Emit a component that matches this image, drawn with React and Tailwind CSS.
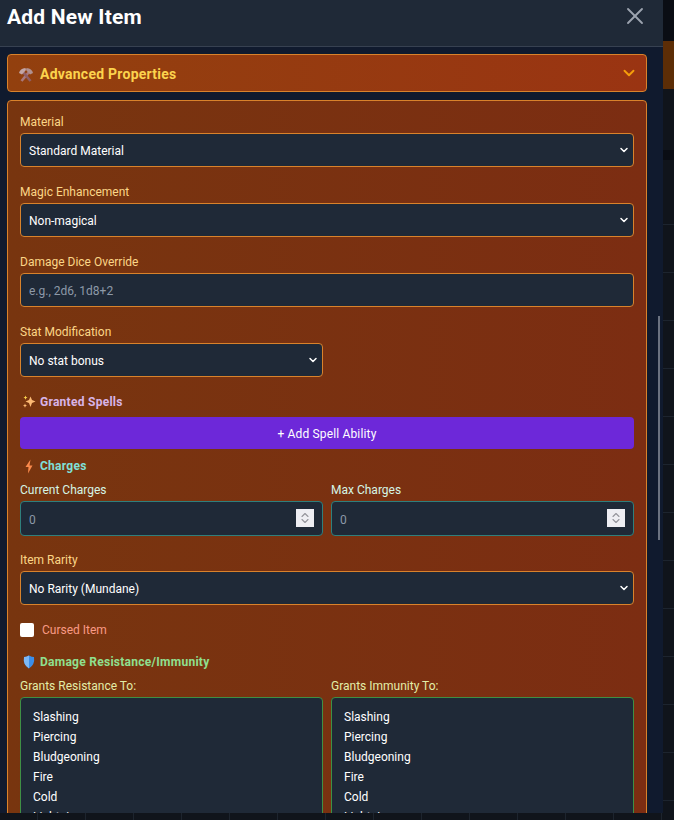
import { ChevronDown, ChevronUp, X } from "lucide-react";

const DAMAGE_TYPES = ["Slashing", "Piercing", "Bludgeoning", "Fire", "Cold", "Lightning"];

function HammerIcon() {
  return (
    <svg width="16" height="15" viewBox="0 0 16 15" className="shrink-0">
      <path d="M3.5 14 L11 5" stroke="#a9787c" strokeWidth="2.6" />
      <path d="M12.5 14 L5 5" stroke="#8f5f66" strokeWidth="2.6" />
      <path d="M1 6 Q2 1.5 7.5 1 L8 3 L4 7.5 Z" fill="#c2a5a6" />
      <path d="M15 6 Q14 1.5 8.5 1 L8 3 L12 7.5 Z" fill="#b0908f" />
    </svg>
  );
}

function SparklesIcon() {
  return (
    <svg width="14" height="14" viewBox="0 0 14 14" className="shrink-0">
      <path d="M8.5 1.5 L10 5 L13.5 6.5 L10 8 L8.5 12 L7 8 L3.5 6.5 L7 5 Z" fill="#fdba74" />
      <path d="M3.5 .5 L4.1 2 L5.5 2.6 L4.1 3.2 L3.5 4.7 L2.9 3.2 L1.5 2.6 L2.9 2 Z" fill="#fcd34d" />
      <path d="M3 8.5 L3.6 10 L5 10.6 L3.6 11.2 L3 12.7 L2.4 11.2 L1 10.6 L2.4 10 Z" fill="#fdba74" />
    </svg>
  );
}

function BoltIcon() {
  return (
    <svg width="14" height="15" viewBox="0 0 14 15" className="shrink-0">
      <path d="M8.5 .5 L3.5 8 L6.5 8 L6 14.5 L10.5 6.5 L7.5 6.5 Z" fill="#fb8a4c" />
    </svg>
  );
}

function ShieldIcon() {
  return (
    <svg width="14" height="14" viewBox="0 0 14 14" className="shrink-0">
      <path d="M7 .5 Q10 2 12 2 Q13.2 9.5 7 13.5 Q.8 9.5 2 2 Q4 2 7 .5 Z" fill="#3b8eea" />
      <path d="M7 .5 Q4 2 2 2 Q.8 9.5 7 13.5 Z" fill="#7db8f5" />
    </svg>
  );
}

function Field({ label, labelClass = "text-[#fcd687]", children, className = "" }) {
  return (
    <div className={className}>
      <label className={`block text-[12px] leading-[16px] mb-[3px] ${labelClass}`}>{label}</label>
      {children}
    </div>
  );
}

function Select({ children }) {
  return (
    <div className="relative">
      <select className="block h-[34px] w-full appearance-none rounded-[4px] border border-[#d9822b] bg-[#1f2937] pl-[8px] pr-[20px] pt-[2px] text-[12px] text-white outline-none">
        {children}
      </select>
      <ChevronDown size={12} strokeWidth={3} className="pointer-events-none absolute right-[4px] top-[11px] text-white" />
    </div>
  );
}

const numberClass =
  "block w-full h-[35px] rounded-[4px] border border-[#2f7f7c] bg-[#1f2937] px-[8px] pt-[2px] text-[12px] text-white placeholder:text-[#8d99a8] outline-none [appearance:textfield] [&::-webkit-inner-spin-button]:appearance-none";

function NumberInput() {
  return (
    <div className="relative">
      <input type="number" placeholder="0" className={numberClass} />
      <div className="absolute right-[9px] top-[8px] flex h-[18px] w-[18px] flex-col items-center justify-center bg-[#eeeef3] text-[#94949c]">
        <ChevronUp size={14} strokeWidth={2.2} className="-mb-[3px]" />
        <ChevronDown size={14} strokeWidth={2.2} className="-mt-[3px]" />
      </div>
    </div>
  );
}

function SectionTitle({ icon, color, children }) {
  return (
    <div className={`flex items-center gap-[4px] pl-[2px] text-[12px] leading-[16px] font-bold tracking-[0.27px] ${color}`}>
      {icon}
      <span>{children}</span>
    </div>
  );
}

function DamageList({ label }) {
  return (
    <Field label={label} labelClass="text-[#e3eda8]">
      <div className="h-[130px] overflow-hidden rounded-[4px] border border-[#3f8f45] bg-[#1f2937] pl-[12px] pt-[9px] text-[12px] leading-[20px] text-white">
        {DAMAGE_TYPES.map((type) => (
          <div key={type}>{type}</div>
        ))}
      </div>
    </Field>
  );
}

export default function App() {
  return (
    <div className="relative h-[820px] w-[674px] overflow-hidden bg-[#10141b] bg-[linear-gradient(#1d242e_1px,transparent_1px),linear-gradient(90deg,#1d242e_1px,transparent_1px)] bg-[size:48px_48px] bg-[position:37px_32px] font-['Roboto','Noto_Sans',sans-serif]">
      <div className="relative h-[813px] w-[663px] overflow-hidden bg-[#101a2e]">
        <header className="flex h-[47px] items-center justify-between border-b border-[#374151] bg-[#1f2937] pl-[7px] pr-[14px] pb-[14px]">
          <h1 className="pt-[2px] text-[21px] font-bold leading-[28px] tracking-[0.2px] text-white">Add New Item</h1>
          <X size={28} strokeWidth={1.6} className="text-[#9ca3af]" />
        </header>

        <div className="pl-[7px] pr-[16px] pt-[7px]">
          <div className="flex h-[38px] items-center justify-between rounded-[4px] border border-[#d9822b] bg-gradient-to-r from-[#92400e] to-[#9a3412] pl-[10px] pr-[8px]">
            <div className="flex items-center gap-[6px] pt-[3px] text-[14px] font-bold tracking-[0.25px] text-[#fcd34d]">
              <HammerIcon />
              <span>Advanced Properties</span>
            </div>
            <ChevronDown size={18} strokeWidth={2.5} className="-mt-[1px] text-[#f59e0b]" />
          </div>

          <div className="mt-[8px] h-[800px] rounded-[4px] border border-[#d9822b] bg-gradient-to-r from-[#78350f] to-[#7c2d12] px-[12px] pt-[13px]">
            <Field label="Material">
              <Select>
                <option>Standard Material</option>
              </Select>
            </Field>
            <Field label="Magic Enhancement" className="mt-[17px]">
              <Select>
                <option>Non-magical</option>
              </Select>
            </Field>
            <Field label="Damage Dice Override" className="mt-[17px]">
              <input
                placeholder="e.g., 2d6, 1d8+2"
                className="block h-[34px] w-full rounded-[4px] border border-[#d9822b] bg-[#1f2937] px-[8px] pt-[2px] text-[12px] text-white placeholder:text-[#8d99a8] outline-none"
              />
            </Field>
            <Field label="Stat Modification" className="mt-[17px]">
              <div className="grid grid-cols-2 gap-[8px]">
                <Select>
                  <option>No stat bonus</option>
                </Select>
              </div>
            </Field>

            <div className="mt-[17px]">
              <SectionTitle icon={<SparklesIcon />} color="text-[#d8b4e8]">Granted Spells</SectionTitle>
              <button className="mt-[7px] h-[32px] w-full rounded-[4px] bg-[#6d28d9] pt-[2px] text-[12px] tracking-[0.15px] text-white">
                + Add Spell Ability
              </button>
            </div>

            <div className="mt-[9px]">
              <SectionTitle icon={<BoltIcon />} color="text-[#7fe0d8]">Charges</SectionTitle>
              <div className="mt-[8px] grid grid-cols-2 gap-[8px]">
                <Field label="Current Charges" labelClass="text-[#d5f5e6]">
                  <NumberInput />
                </Field>
                <Field label="Max Charges" labelClass="text-[#d5f5e6]">
                  <NumberInput />
                </Field>
              </div>
            </div>

            <Field label="Item Rarity" className="mt-[16px]">
              <Select>
                <option>No Rarity (Mundane)</option>
              </Select>
            </Field>

            <label className="mt-[17px] flex items-center gap-[8px] text-[12px] leading-[16px] text-[#f99a85]">
              <input type="checkbox" className="h-[14px] w-[14px] appearance-none rounded-[2px] bg-white" />
              <span>Cursed Item</span>
            </label>

            <div className="mt-[16px]">
              <SectionTitle icon={<ShieldIcon />} color="text-[#8fe08f]">Damage Resistance/Immunity</SectionTitle>
              <div className="mt-[8px] grid grid-cols-2 gap-[8px]">
                <DamageList label="Grants Resistance To:" />
                <DamageList label="Grants Immunity To:" />
              </div>
            </div>
          </div>
        </div>

        <div className="absolute right-[3px] top-[316px] h-[224px] w-[2px] bg-[#6b7280]" />
      </div>

      {/* page behind the modal, right edge */}
      <div className="absolute right-0 top-0 flex h-[224px] w-[11px] flex-col bg-[#10141b]">
        <div className="h-[41px] bg-[#0a0d14]" />
        <div className="h-[48px] bg-[#5c2d06]" />
        <div className="mt-[61px] h-[10px] bg-[#0a0d14]" />
      </div>
    </div>
  );
}
